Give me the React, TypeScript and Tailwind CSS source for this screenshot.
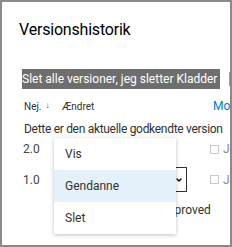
import { ChevronDown } from "lucide-react";

export default function App() {
  return (
    <div className="relative h-[247px] w-[232px] overflow-hidden border-2 border-[#8a8a8a] bg-white font-['Roboto',Arial,sans-serif] text-[#323130]">
      <h1 className="ml-[17px] mt-[17px] text-[16px] leading-[22px] tracking-[-0.2px] text-black">Versionshistorik</h1>

      <div className="ml-[20px] mt-[28px] flex h-[20px] items-center gap-[9px]">
        <div className="flex h-[20px] w-[198px] shrink-0 items-center overflow-hidden whitespace-nowrap bg-[#6e6e6e] text-[12px] text-white">
          Slet alle versioner, jeg sletter Kladder
        </div>
        <div className="h-[14px] w-[2px] shrink-0 bg-[#9a9a9a]" />
      </div>

      <div className="ml-[22px] mt-[10px] flex h-[14px] items-center whitespace-nowrap text-[10px]">
        <span className="shrink-0">Nej.</span>
        <span className="ml-[4px] shrink-0 text-[9px] text-[#555]">↓</span>
        <span className="ml-[12px] w-[151px] shrink-0">Ændret</span>
        <span className="shrink-0 text-[12px] text-[#0078d4]">Modificeret</span>
      </div>

      <div className="ml-[22px] mt-[8px] whitespace-nowrap text-[12px] leading-[16px] tracking-[-0.3px]">
        Dette er den aktuelle godkendte version
      </div>

      <div className="ml-[21px] mt-[3px] flex h-[18px] items-center whitespace-nowrap text-[12px] text-[#444]">
        <span className="w-[187px] shrink-0">2.0</span>
        <span className="h-[9px] w-[9px] shrink-0 border border-[#c8c8c8]" />
        <span className="ml-[4px] shrink-0 text-[#888]">Ja</span>
      </div>

      <div className="ml-[21px] mt-[9px] flex h-[25px] items-center whitespace-nowrap text-[12px] text-[#444]">
        <span className="w-[32px] shrink-0">1.0</span>
        <div className="flex h-[25px] w-[132px] shrink-0 items-center justify-end border border-[#333] pr-[3px]">
          <ChevronDown size={8} strokeWidth={4} className="text-black" />
        </div>
        <span className="ml-[23px] h-[9px] w-[9px] shrink-0 border border-[#c8c8c8]" />
        <span className="ml-[4px] shrink-0 text-[#888]">Ja</span>
      </div>

      <div className="ml-[158px] mt-[10px] whitespace-nowrap text-[12px] leading-[16px]">Approved</div>

      <div className="absolute left-[52px] top-[136px] w-[122px] bg-white text-[12px] shadow-[0_1px_4px_rgba(0,0,0,0.25)]">
        <div className="flex h-[32px] items-center px-[11px]">Vis</div>
        <div className="flex h-[32px] items-center bg-[#e5f1fa] px-[11px]">Gendanne</div>
        <div className="flex h-[32px] items-center px-[11px]">Slet</div>
      </div>
    </div>
  );
}
